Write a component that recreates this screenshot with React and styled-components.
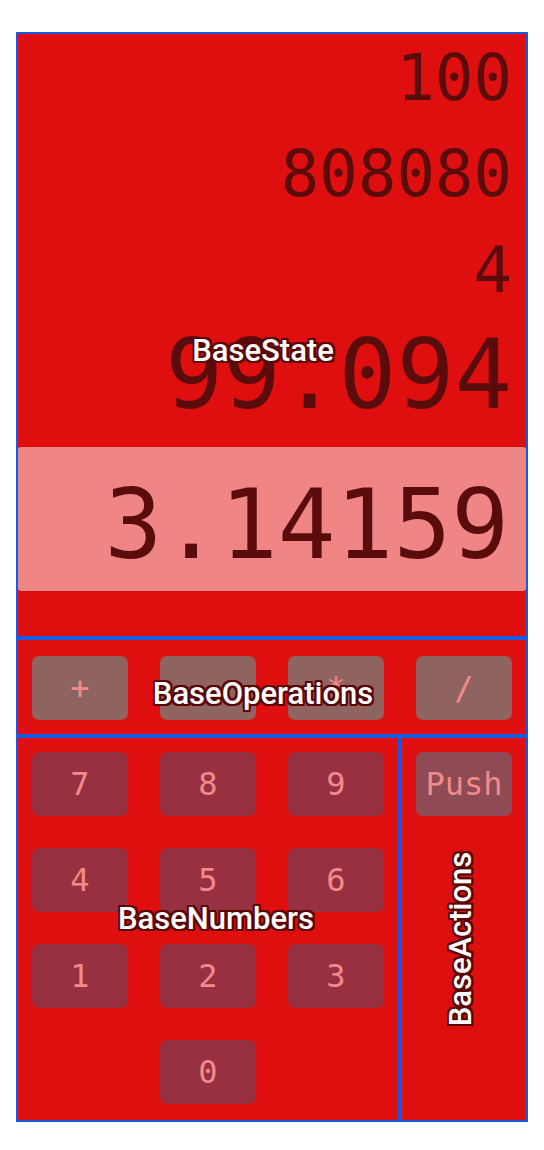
import React from 'react';
import styled, { createGlobalStyle } from 'styled-components';

const mono = "'DejaVu Sans Mono', 'Liberation Mono', monospace";

const GlobalStyle = createGlobalStyle`
  body {
    margin: 0;
    background: #ffffff;
    font-family: ${mono};
  }
`;

const stack = ['100', '808080', '4'];
const operations = ['+', '-', '*', '/'];
const numbers = ['7', '8', '9', '4', '5', '6', '1', '2', '3', '0'];

const App = () => {
  return (
    <>
      <GlobalStyle />
      <Frame>
        <Region $height='606px'>
          <StackList>
            {stack.map((value, i) => (
              <StackLine key={i}>{value}</StackLine>
            ))}
            <StackLine $big>99.094</StackLine>
          </StackList>
          <Entry readOnly value='3.14159' />
          <Label $x='247px' $y='318px'>
            BaseState
          </Label>
        </Region>

        <Region $height='98px'>
          <OpsRow>
            {operations.map((op) => (
              <Key key={op} $variant='op'>
                {op}
              </Key>
            ))}
          </OpsRow>
          <Label $x='247px' $y='55px'>
            BaseOperations
          </Label>
        </Region>

        <Bottom>
          <Region $height='386px' $width='384px'>
            <NumberGrid>
              {numbers.map((n) => (
                <Key key={n} $variant='num' className={n === '0' ? 'zero' : ''}>
                  {n}
                </Key>
              ))}
            </NumberGrid>
            <Label $x='200px' $y='182px'>
              BaseNumbers
            </Label>
          </Region>
          <Region $height='386px' $width='128px'>
            <Actions>
              <Key $variant='action'>Push</Key>
            </Actions>
            <Label $x='60px' $y='203px' $vertical>
              BaseActions
            </Label>
          </Region>
        </Bottom>
      </Frame>
    </>
  );
};

const Frame = styled.div`
  width: 512px;
  margin: 32px 16px;
  background: #e00f0f;
`;

const Region = styled.section`
  position: relative;
  display: flow-root;
  box-sizing: border-box;
  width: ${(p) => p.$width || '100%'};
  height: ${(p) => p.$height};
  box-shadow: inset 0 0 0 2px #155be8;
`;

const StackList = styled.div`
  display: flex;
  flex-direction: column;
  align-items: flex-end;
  padding: 0 16px;
  margin-top: -2px;
  color: #5a0b0b;
`;

const StackLine = styled.div`
  font-size: ${(p) => (p.$big ? '96px' : '64px')};
  line-height: ${(p) => (p.$big ? '115px' : '96px')};
  white-space: nowrap;
`;

const Entry = styled.input`
  display: block;
  box-sizing: border-box;
  width: 508px;
  height: 144px;
  margin: 14px 2px 0;
  padding: 12px 16px 0;
  border: 1px dotted #c99494;
  border-radius: 3px;
  background: #f08585;
  color: #5a0b0b;
  font-family: ${mono};
  font-size: 96px;
  text-align: right;
  outline: none;
`;

const OpsRow = styled.div`
  display: grid;
  grid-template-columns: repeat(4, 128px);
  justify-items: center;
  padding-top: 18px;
`;

const Bottom = styled.div`
  display: flex;
`;

const NumberGrid = styled.div`
  display: grid;
  grid-template-columns: repeat(3, 128px);
  grid-auto-rows: 64px;
  row-gap: 32px;
  justify-items: center;
  padding-top: 16px;

  .zero {
    grid-column: 2;
  }
`;

const Actions = styled.div`
  display: flex;
  justify-content: center;
  padding-top: 16px;
`;

const keyColors = {
  op: '#8e6360',
  num: '#973141',
  action: '#8e4b55',
};

const Key = styled.button`
  width: 96px;
  height: 64px;
  border: none;
  border-radius: 7px;
  background: ${(p) => keyColors[p.$variant]};
  color: #f38a8a;
  font-family: ${mono};
  font-size: 32px;
  padding: 0;
  cursor: pointer;
`;

const Label = styled.span`
  position: absolute;
  left: ${(p) => p.$x};
  top: ${(p) => p.$y};
  transform: translate(-50%, -50%) ${(p) => (p.$vertical ? 'rotate(-90deg)' : '')};
  font-family: Roboto, 'Noto Sans', sans-serif;
  font-weight: 500;
  font-size: 31px;
  color: #ffffff;
  white-space: nowrap;
  pointer-events: none;
  text-shadow: -2px -2px 0 #5a0505, 2px -2px 0 #5a0505, -2px 2px 0 #5a0505,
    2px 2px 0 #5a0505, 0 -2px 0 #5a0505, 0 2px 0 #5a0505, -2px 0 0 #5a0505,
    2px 0 0 #5a0505;
`;

export default App;
